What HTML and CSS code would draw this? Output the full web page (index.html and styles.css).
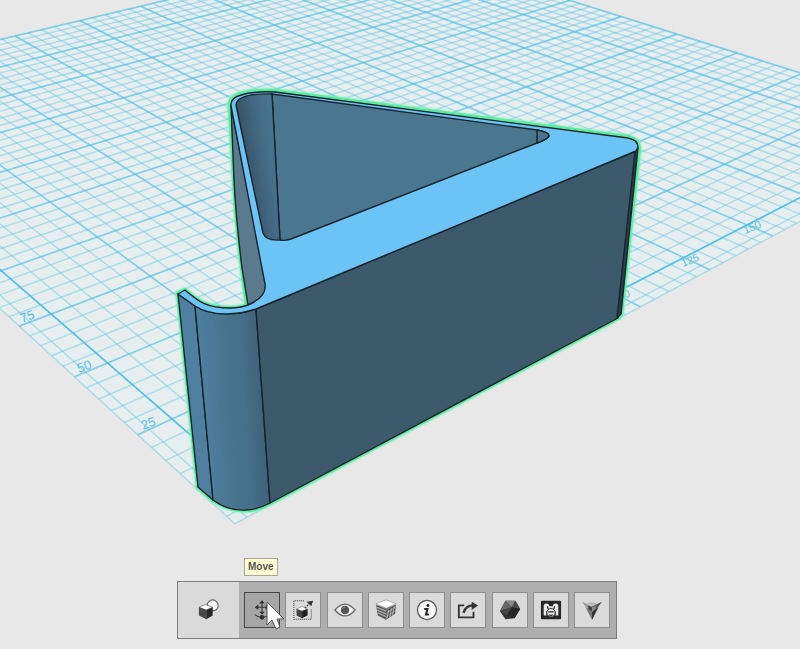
FILE: index.html
```html
<!DOCTYPE html>
<html lang="en">
<head>
    <meta charset="UTF-8">
    <meta name="viewport" content="width=device-width, initial-scale=1.0">
    <title>3D Modeler</title>
    <link rel="stylesheet" href="styles.css">
</head>
<body>
    <main class="workspace">
        <!-- 3D view -->
        <svg class="scene" viewBox="0 0 800 649" preserveAspectRatio="xMidYMid slice" role="img" aria-label="3D model on grid">
            <defs>
                <linearGradient id="hookShade" gradientUnits="userSpaceOnUse" x1="200" y1="400" x2="264" y2="396">
                    <stop offset="0" stop-color="#4f80a2"/>
                    <stop offset="0.4" stop-color="#48758f"/>
                    <stop offset="0.7" stop-color="#456f8a"/>
                    <stop offset="1" stop-color="#3f6178"/>
                </linearGradient>
                <linearGradient id="innerShade" gradientUnits="userSpaceOnUse" x1="244" y1="170" x2="277" y2="165">
                    <stop offset="0" stop-color="#34505f"/>
                    <stop offset="0.5" stop-color="#41667f"/>
                    <stop offset="1" stop-color="#487490"/>
                </linearGradient>
                <filter id="glow" x="-5%" y="-5%" width="110%" height="110%">
                    <feGaussianBlur stdDeviation="1"/>
                </filter>
            </defs>

            <g id="grid"></g>

            <g class="grid-labels">
                <text transform="translate(22 323) rotate(-20)">75</text>
                <text transform="translate(79 373) rotate(-20)">50</text>
                <text transform="translate(143 430) rotate(-20)">25</text>
                <text class="small" transform="translate(614 303) rotate(-22)">100</text>
                <text class="small" transform="translate(683 267) rotate(-22)">125</text>
                <text class="small" transform="translate(745 234) rotate(-22)">150</text>
            </g>

            <!-- Model outline -->
            <path class="glow" filter="url(#glow)" d="M178 293 L185 290 C197 300 205 308 230 308 Q240 308 247 305 L242 268 Q236 220 234 180 L230 106 Q229 98 240 94 Q254 90 275 91 L628 137 Q639 140 639 149 L621 314 L618 318 L270 503 C254 513 232 513 213 500 L198 487 Z"/>
            <path class="outline" d="M178 293 L185 290 C197 300 205 308 230 308 Q240 308 247 305 L242 268 Q236 220 234 180 L230 106 Q229 98 240 94 Q254 90 275 91 L628 137 Q639 140 639 149 L621 314 L618 318 L270 503 C254 513 232 513 213 500 L198 487 Z"/>

            <!-- Model faces -->
            <g class="model">
                <path fill="#5b7a8e" d="M231 106 L266 284 Q267 297 248 305 L242 268 Q236 220 234 180 Z"/>
                <path fill="#4f80a2" d="M178 294 L195 306 L213 500 L198 487 Z"/>
                <path fill="url(#hookShade)" d="M195 306 C212 317 238 315 256 309 L270 503 C254 512 232 514 213 500 Z"/>
                <path fill="#3c5a6b" d="M256 309 L636 151 L618 318 L270 503 Z"/>
                <path fill="#2c3e49" d="M635 152 L638 148 L621 314 L617 318 Z"/>
                <path fill="#6cc3f5" d="M178 294 L185 290 C197 300 205 308 230 308 Q240 308 248 305 Q267 297 265 284 L231 106 Q230 98 241 95 Q254 91 275 92 L628 138 Q638 140 638 147 L636 151 L256 309 C238 315 212 317 195 306 Z"/>
                <path fill="#4b7690" d="M272 94 L537 130 Q549 132 549 136 Q548 139 537 143 L291 239 Q285 241 280 240 Z"/>
                <path fill="url(#innerShade)" d="M272 94 Q237 93 236 105 L263 233 Q266 241 280 240 Z"/>
                <path fill="#48728d" d="M537 130 Q549 132 549 136 Q548 139 537 143 Z"/>
            </g>
        </svg>

        <!-- Toolbar -->
        <div class="toolbar" role="toolbar" aria-label="Object tools">
            <button class="primitives" aria-label="Primitives">
                <svg class="icon" viewBox="0 0 24 24">
                    <circle cx="16" cy="7" r="6" fill="#f8f8f8" stroke="#666" stroke-width="1.2"/>
                    <path fill="#fff" stroke="#555" stroke-width="0.7" d="M1 9 L8 6 L16 9 L9 12 Z"/>
                    <path fill="#484848" d="M1 9 L9 12 V22 L1 18 Z"/>
                    <path fill="#262626" d="M16 9 L9 12 V22 L16 18 Z"/>
                </svg>
            </button>
            <div class="tools">
                <div class="tool-slot">
                    <button class="tool active" aria-label="Move">
                        <svg class="icon" viewBox="0 0 24 24">
                            <path fill="none" stroke="#333" stroke-width="1.2" d="M12 4 V16 M6 9 H18 M4 17 Q12 23 20 17"/>
                            <path fill="#333" d="M12 1 L15 5 H9 Z M4 9 L8 6 V12 Z M20 9 L16 6 V12 Z M12 17 L9 14 H15 Z"/>
                            <circle cx="12" cy="20" r="2.6" fill="#333"/>
                        </svg>
                    </button>
                    <span class="tooltip" role="tooltip">Move</span>
                    <svg class="pointer" viewBox="0 0 20 30">
                        <path fill="#fff" stroke="#555" stroke-width="1" d="M1 1 V24 L6 19 L10 28 L14 26 L11 18 H18 Z"/>
                    </svg>
                </div>
                <button class="tool" aria-label="Scale">
                    <svg class="icon" viewBox="0 0 24 24">
                        <path fill="none" stroke="#444" stroke-width="1.1" stroke-dasharray="1.2 1" d="M13 2 H2 V22 H21 V11"/>
                        <path fill="#fff" stroke="#555" stroke-width="0.5" d="M5 11 L11 8 L17 11 L11 13 Z"/>
                        <path fill="#444" d="M5 11 L11 13 V21 L5 18 Z"/>
                        <path fill="#222" d="M17 11 L11 13 V21 L17 18 Z"/>
                        <path stroke="#333" stroke-width="1.3" stroke-dasharray="2 1" d="M14 10 L20 4"/>
                        <path fill="#333" d="M23 2 L21 8 L16 3 Z"/>
                    </svg>
                </button>
                <button class="tool" aria-label="View">
                    <svg class="icon" viewBox="0 0 24 24">
                        <path fill="#f2f2f2" stroke="#666" stroke-width="1.4" d="M1 12 Q12 -1 23 12 Q12 25 1 12 Z"/>
                        <circle cx="12" cy="12" r="4.6" fill="#555"/>
                        <path fill="none" stroke="#999" stroke-width="1" d="M9 11 Q10 9 12 9"/>
                    </svg>
                </button>
                <button class="tool" aria-label="Layers">
                    <svg class="icon" viewBox="0 0 24 24">
                        <path fill="#777" d="M1 6 L12 10 L23 6 L22 16 L12 23 L3 18 Z"/>
                        <path fill="none" stroke="#444" stroke-width="0.9" d="M2 8 L12 12 M2 11 L12 15 M2 14 L12 18 M3 17 L12 21 M12 14 L22 7 M12 18 L22 11 M13 21 L22 15"/>
                        <path fill="none" stroke="#ddd" stroke-width="0.7" d="M2 9 L12 13 M2 12 L12 16 M3 15 L12 19 M15 12 L13 21 M18 10 L16 20 M21 8 L19 18"/>
                        <path fill="#fff" stroke="#888" stroke-width="0.6" d="M1 5 L12 1 L23 5 L12 10 Z"/>
                    </svg>
                </button>
                <button class="tool" aria-label="Info">
                    <svg class="icon" viewBox="0 0 24 24">
                        <circle cx="12" cy="12" r="10.4" fill="#f8f8f8" stroke="#555" stroke-width="1.4"/>
                        <circle cx="13" cy="7" r="1.6" fill="#222"/>
                        <path fill="none" stroke="#222" stroke-width="2.2" d="M9 11 H12.500 L11 17 H14"/>
                    </svg>
                </button>
                <button class="tool" aria-label="Export">
                    <svg class="icon" viewBox="0 0 24 24">
                        <path fill="none" stroke="#333" stroke-width="2" d="M8 7 H2 V20 H18 V14"/>
                        <path fill="none" stroke="#333" stroke-width="2.6" d="M7 15 Q10 7 17 7"/>
                        <path fill="#333" d="M16 3 L23 7 L16 12 Z"/>
                    </svg>
                </button>
                <button class="tool" aria-label="Material">
                    <svg class="icon" viewBox="0 0 24 24">
                        <path fill="#333" d="M7 2 L18 2 L23 11 L17 21 L7 22 L1 13 Z"/>
                        <path fill="#888" d="M7 2 L18 2 L14 9 Z"/>
                        <path fill="#666" d="M7 2 L14 9 L1 13 Z"/>
                        <path fill="#4a4a4a" d="M18 2 L23 11 L14 9 Z"/>
                        <path fill="#444" d="M14 9 L9 18 L1 13 Z"/>
                        <path fill="#262626" d="M14 9 L23 11 L17 21 L9 18 Z"/>
                    </svg>
                </button>
                <button class="tool" aria-label="Meshmixer">
                    <svg class="icon" viewBox="0 0 24 24">
                        <rect x="1" y="2" width="22" height="20" rx="1" fill="#262626"/>
                        <path fill="#e8e8e8" d="M4 18 V8 Q4 5 7 5 Q10 5 10 8 H14 Q14 5 17 5 Q20 5 20 8 V18 H17 Q18 11 12 11 Q6 11 7 18 Z"/>
                        <circle cx="12" cy="15" r="4.6" fill="#e8e8e8" stroke="#262626" stroke-width="1"/>
                        <path fill="none" stroke="#262626" stroke-width="1.4" d="M8 8 L9 11 M16 8 L15 11 M9 14 H15 M10 17 Q12 19 14 17"/>
                    </svg>
                </button>
                <button class="tool" aria-label="Tinkerplay">
                    <svg class="icon" viewBox="0 0 24 24">
                        <path fill="#999" d="M1 3 L12 8 L10 15 Z"/>
                        <path fill="#555" d="M23 3 L12 8 L14 15 Z"/>
                        <path fill="#bbb" d="M6 5 L12 3 L18 5 L12 8 Z"/>
                        <path fill="#777" d="M5 9 L12 14 V23 Z"/>
                        <path fill="#333" d="M19 9 L12 14 V23 Z"/>
                        <path fill="#444" d="M8 7 L12 9 V14 L8 11 Z"/>
                        <path fill="#888" d="M16 7 L12 9 V14 L16 11 Z"/>
                    </svg>
                </button>
            </div>
        </div>
    </main>

    <script src="grid.js"></script>
</body>
</html>
```

FILE: styles.css
```css
* {
    box-sizing: border-box;
}
body {
    margin: 0;
    background-color: #e8e8e8;
    font-family: "Liberation Sans", Arial, sans-serif;
}
.workspace {
    display: grid;
    height: 100vh;
    overflow: hidden;
}
.scene {
    grid-area: 1 / 1;
    width: 100%;
    height: 100%;
}

/* Grid sheet */
.sheet {
    fill: #e6eef0;
}
.minor {
    stroke: #5bc0de;
    stroke-opacity: 0.4;
    stroke-width: 1.5;
}
.major {
    stroke: #4bbde2;
    stroke-opacity: 0.65;
    stroke-width: 1.7;
}
.axis {
    stroke: #3fbbe6;
    stroke-opacity: 0.9;
    stroke-width: 1.7;
}
.grid-labels {
    fill: #5cc0df;
    font-size: 13px;
}
.grid-labels .small {
    font-size: 11px;
}

/* Model */
.glow, .outline {
    fill: none;
    stroke-linejoin: round;
}
.glow {
    stroke: #7df0b6;
    stroke-width: 5;
}
.outline {
    stroke: #5cec9f;
    stroke-width: 4;
}
.model path {
    stroke: #16242c;
    stroke-width: 1.4;
    stroke-linejoin: round;
}

/* Toolbar */
.toolbar {
    grid-area: 1 / 1;
    align-self: end;
    justify-self: center;
    display: flex;
    width: 440px;
    max-width: 100%;
    height: 58px;
    margin-bottom: 10px;
    margin-right: 6px;
    border: 1px solid #7c7c7c;
    background-color: #aeaeae;
}
.primitives {
    display: flex;
    align-items: center;
    justify-content: center;
    width: 61px;
    padding: 0;
    border: none;
    background-color: #dadada;
    cursor: pointer;
}
.tools {
    flex: 1;
    display: flex;
    align-items: center;
    justify-content: space-between;
    padding: 0 6px 0 5px;
}
.tool {
    display: flex;
    align-items: center;
    justify-content: center;
    width: 36px;
    height: 36px;
    padding: 0;
    border: 1px solid #8e8e8e;
    background-color: #dadada;
    cursor: pointer;
}
.tool.active {
    border-color: #444;
    background-color: #a6a6a6;
}
.icon {
    width: 22px;
    height: 22px;
}
.tool-slot {
    position: relative;
}
.tooltip {
    position: absolute;
    left: 0;
    bottom: 52px;
    padding: 0 3px;
    border: 1px solid #a8a8a0;
    background-color: #ffffd2;
    color: #555;
    font-size: 10px;
    font-weight: bold;
    line-height: 16px;
}
.pointer {
    position: absolute;
    left: 22px;
    top: 9px;
    width: 20px;
    height: 30px;
    pointer-events: none;
}
```

FILE: grid.js
```js
// Known positions of the sheet in the view: [u, v, x, y]
const anchors = [
    [25, 0, 172, 419],
    [0, 150, 747, 225],
    [250, 75, 15, 36],
    [75, 250, 737, 53]
];
const START = -7.5;
const END = 250;

// Solve the perspective matrix from the anchors
function solvePerspective(points) {
    const m = [];
    points.forEach(([u, v, x, y]) => {
        m.push([u, v, 1, 0, 0, 0, -u * x, -v * x, x]);
        m.push([0, 0, 0, u, v, 1, -u * y, -v * y, y]);
    });
    for (let i = 0; i < 8; i++) {
        let best = i;
        for (let r = i + 1; r < 8; r++) {
            if (Math.abs(m[r][i]) > Math.abs(m[best][i])) best = r;
        }
        [m[i], m[best]] = [m[best], m[i]];
        for (let r = 0; r < 8; r++) {
            if (r === i) continue;
            const k = m[r][i] / m[i][i];
            for (let c = i; c < 9; c++) m[r][c] -= k * m[i][c];
        }
    }
    return m.map((row, i) => row[8] / row[i]);
}

const p = solvePerspective(anchors);

function project(u, v) {
    const w = p[6] * u + p[7] * v + 1;
    return [(p[0] * u + p[1] * v + p[2]) / w, (p[3] * u + p[4] * v + p[5]) / w];
}

const grid = document.getElementById('grid');

function draw(tag, attrs) {
    const el = document.createElementNS('http://www.w3.org/2000/svg', tag);
    for (const name in attrs) el.setAttribute(name, attrs[name]);
    grid.appendChild(el);
}

function line(a, b, className) {
    draw('line', { x1: a[0], y1: a[1], x2: b[0], y2: b[1], class: className });
}

const corners = [[START, START], [END, START], [END, END], [START, END]];
draw('polygon', { class: 'sheet', points: corners.map(c => project(c[0], c[1]).join(',')).join(' ') });

[START, -5].forEach(t => {
    line(project(t, START), project(t, END), 'minor');
    line(project(START, t), project(END, t), 'minor');
});

for (let t = 0; t <= END; t += 5) {
    const type = t === 0 ? 'axis' : t % 25 === 0 ? 'major' : 'minor';
    line(project(t, START), project(t, END), type);
    line(project(START, t), project(END, t), type);
}
```
